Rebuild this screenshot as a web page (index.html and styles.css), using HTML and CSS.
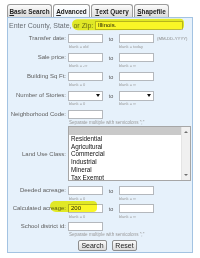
FILE: index.html
```html
<!DOCTYPE html>
<html>
<head>
<meta charset="utf-8">
<link rel="stylesheet" href="styles.css">
</head>
<body>
<div class="tabs">
  <div class="tab t1"><u>B</u>asic Search</div>
  <div class="tab t2 active"><u>A</u>dvanced</div>
  <div class="tab t3"><u>T</u>ext Query</div>
  <div class="tab t4"><u>S</u>hapefile</div>
</div>
<div class="panel">
  <div class="zip"><span class="ziplabel">Enter County, State, or Zip:</span><span class="zipinput">Illinois.</span></div>

  <div class="row first">
    <div class="label">Transfer date:</div>
    <div class="ctl">
      <div class="line"><span class="inp"></span><span class="to">to</span><span class="inp"></span><span class="fmt">(MM-DD-YYYY)</span></div>
      <div class="hints"><span class="h1">blank = old</span><span>blank = today</span></div>
    </div>
  </div>

  <div class="row">
    <div class="label">Sale price:</div>
    <div class="ctl">
      <div class="line"><span class="inp"></span><span class="to">to</span><span class="inp"></span></div>
      <div class="hints"><span class="h1">blank = -∞</span><span>blank = ∞</span></div>
    </div>
  </div>

  <div class="row">
    <div class="label">Building Sq Ft:</div>
    <div class="ctl">
      <div class="line"><span class="inp"></span><span class="to">to</span><span class="inp"></span></div>
      <div class="hints"><span class="h1">blank = 0</span><span>blank = ∞</span></div>
    </div>
  </div>

  <div class="row">
    <div class="label">Number of Stories:</div>
    <div class="ctl">
      <div class="line"><span class="inp sel"><span class="arrow"></span></span><span class="to">to</span><span class="inp sel"><span class="arrow"></span></span></div>
      <div class="hints"><span class="h1">blank = 0</span><span>blank = ∞</span></div>
    </div>
  </div>

  <div class="row">
    <div class="label">Neighborhood Code:</div>
    <div class="ctl">
      <div class="line"><span class="inp"></span></div>
      <div class="hints sep">Separate multiple with semicolons ";"</div>
    </div>
  </div>

  <div class="row land">
    <div class="label mid">Land Use Class:</div>
    <div class="listbox">
      <div class="opts">
        <div class="opt blank"></div>
        <div class="opt">Residential</div>
        <div class="opt">Agricultural</div>
        <div class="opt">Commercial</div>
        <div class="opt">Industrial</div>
        <div class="opt">Mineral</div>
        <div class="opt">Tax Exempt</div>
      </div>
      <div class="scroll"><span class="up"></span><span class="down"></span></div>
    </div>
  </div>

  <div class="row deeded">
    <div class="label">Deeded acreage:</div>
    <div class="ctl">
      <div class="line"><span class="inp"></span><span class="to">to</span><span class="inp"></span></div>
      <div class="hints"><span class="h1">blank = 0</span><span>blank = ∞</span></div>
    </div>
  </div>

  <div class="row tight">
    <div class="label">Calculated acreage:</div>
    <div class="ctl">
      <div class="line"><span class="inp val">200</span><span class="to">to</span><span class="inp"></span></div>
      <div class="hints"><span class="h1">blank = 0</span><span>blank = ∞</span></div>
    </div>
  </div>

  <div class="row tight">
    <div class="label">School district id:</div>
    <div class="ctl">
      <div class="line"><span class="inp"></span></div>
      <div class="hints sep">Separate multiple with semicolons ";"</div>
    </div>
  </div>

  <div class="buttons">
    <span class="btn b1">Search</span>
    <span class="btn b2">Reset</span>
  </div>

  <span class="marker m1"></span>
  <span class="marker m2"></span>
</div>
</body>
</html>
```
FILE: styles.css
```css
body {
  margin: 0;
  background: #fff;
  font-family: "Liberation Sans", Arial, sans-serif;
}
.tabs {
  display: flex;
  gap: 1px;
  padding: 4px 0 0 7px;
  height: 13px;
}
.tab {
  box-sizing: border-box;
  height: 13px;
  border: 1px solid #9c9c9c;
  border-bottom: none;
  border-radius: 3px 3px 0 0;
  background: linear-gradient(#fbfbfb, #dcdcdc);
  font-size: 6.4px;
  font-weight: bold;
  color: #222;
  display: flex;
  align-items: center;
  justify-content: center;
}
.tab.active {
  background: linear-gradient(#ffffff, #eef4fa);
}
.t1 { width: 45px; }
.t2 { width: 37px; }
.t3 { width: 42px; }
.t4 { width: 35px; }
.panel {
  position: relative;
  box-sizing: border-box;
  margin: 0 7px;
  width: 186px;
  height: 236px;
  border: 1px solid #a3c3e2;
  background: #e6f1fb;
}
.zip {
  margin-top: 1px;
  height: 12px;
  display: flex;
  align-items: center;
  padding-left: 1px;
}
.ziplabel {
  font-size: 7px;
  color: #6a6f75;
  width: 86px;
  white-space: nowrap;
}
.zipinput {
  box-sizing: border-box;
  width: 88px;
  height: 9px;
  border: 1px solid #bcbcbc;
  background: #fff;
  font-size: 6px;
  line-height: 7px;
  padding-left: 2px;
  color: #222;
}
.row {
  display: flex;
  margin-top: 3px;
}
.row.land { margin-top: 0; }
.row.deeded { margin-top: 5px; }
.row.tight { margin-top: 2px; }
.label {
  width: 58px;
  margin-right: 2px;
  flex: none;
  text-align: right;
  font-size: 6px;
  line-height: 9px;
  height: 9px;
  color: #606060;
  white-space: nowrap;
}
.label.mid {
  align-self: center;
  margin-top: 2px;
}
.line {
  display: flex;
  align-items: center;
  height: 9px;
}
.inp {
  box-sizing: border-box;
  width: 35px;
  height: 9px;
  border: 1px solid #b4b8bd;
  background: #fff;
}
.inp.val {
  font-size: 6px;
  line-height: 7px;
  padding-left: 2px;
  color: #222;
}
.inp.sel {
  height: 10px;
  display: flex;
  align-items: center;
  justify-content: flex-end;
  padding-right: 2px;
}
.arrow {
  width: 0;
  height: 0;
  border-left: 2px solid transparent;
  border-right: 2px solid transparent;
  border-top: 3px solid #111;
}
.to {
  width: 16px;
  text-align: center;
  font-size: 5.5px;
  color: #555;
}
.fmt {
  margin-left: 3px;
  font-size: 4.3px;
  color: #8a8a8a;
  white-space: nowrap;
}
.hints {
  display: flex;
  height: 7px;
  line-height: 7px;
  font-size: 4px;
  color: #9a9a9a;
  white-space: nowrap;
}
.h1 {
  width: 50px;
  padding-left: 1px;
}
.hints.sep {
  font-size: 4.6px;
  padding-left: 1px;
}
.listbox {
  box-sizing: border-box;
  width: 123px;
  height: 55px;
  border: 1px solid #a6a6a6;
  background: #fff;
  display: flex;
  overflow: hidden;
}
.opts {
  flex: 1;
}
.opt {
  height: 7.8px;
  line-height: 7.8px;
  font-size: 6.3px;
  color: #111;
  padding-left: 2px;
  white-space: nowrap;
}
.opt.blank {
  background: #c9c9c9;
}
.scroll {
  width: 9px;
  background: #f0f0f0;
  border-left: 1px solid #e4e4e4;
  display: flex;
  flex-direction: column;
  align-items: center;
  justify-content: space-between;
  padding: 4px 0;
  box-sizing: border-box;
}
.up, .down {
  width: 0;
  height: 0;
  border-left: 2px solid transparent;
  border-right: 2px solid transparent;
}
.up { border-bottom: 2px solid #707070; }
.down { border-top: 2px solid #707070; }
.buttons {
  display: flex;
  gap: 5px;
  margin-top: 2px;
  padding-left: 70px;
}
.btn {
  box-sizing: border-box;
  height: 11px;
  border: 1px solid #8e8e8e;
  border-radius: 2px;
  background: linear-gradient(#fafafa, #dcdcdc);
  font-size: 7px;
  line-height: 9px;
  color: #222;
  text-align: center;
}
.b1 { width: 29px; }
.b2 { width: 25px; }
.marker {
  position: absolute;
  background: rgba(248, 244, 0, 0.85);
  mix-blend-mode: multiply;
  border-radius: 5px 4px 4px 6px;
}
.m1 {
  left: 64px;
  top: 1px;
  width: 112px;
  height: 11px;
  transform: rotate(-0.4deg);
}
.m2 {
  left: 42px;
  top: 183px;
  width: 47px;
  height: 11px;
}
```
